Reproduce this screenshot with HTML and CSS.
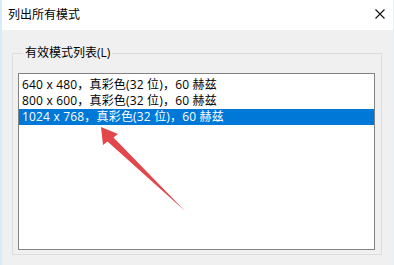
FILE: index.html
```html
<!DOCTYPE html>
<html lang="zh-CN">
<head>
<meta charset="utf-8">
<link rel="stylesheet" href="styles.css">
</head>
<body>
<div class="window">
  <div class="titlebar">
    <span class="title">列出所有模式</span>
    <svg class="close" width="10" height="10" viewBox="0 0 10 10"><path d="M0.5 0.5 L9.5 9.5 M9.5 0.5 L0.5 9.5" stroke="#111" stroke-width="1.1" fill="none"/></svg>
  </div>
  <div class="content">
    <fieldset class="group">
      <legend>有效模式列表(L)</legend>
      <div class="listbox">
        <div class="row">640 x 480，真彩色(32 位)，60 赫兹</div>
        <div class="row">800 x 600，真彩色(32 位)，60 赫兹</div>
        <div class="row selected">1024 x 768，真彩色(32 位)，60 赫兹</div>
      </div>
    </fieldset>
  </div>
  <svg class="arrow" width="394" height="265" viewBox="0 0 394 265">
    <polygon points="101,127 118,134 113.5,137.5 185,211 107.5,141.5 103,145" fill="#e2474b"/>
  </svg>
</div>
</body>
</html>
```
FILE: styles.css
```css
html, body {
  margin: 0;
  padding: 0;
}
body {
  font-family: "Open Sans", "Noto Sans CJK SC", sans-serif;
  font-size: 12px;
  color: #000;
  background: #f0f0f0;
}
.window {
  position: relative;
  width: 394px;
  height: 265px;
  box-sizing: border-box;
  border-left: 2px solid #d6ecfa;
  border-right: 1px solid #e3f1fb;
  background: #f0f0f0;
  overflow: hidden;
}
.titlebar {
  height: 30px;
  background: #fff;
  display: flex;
  align-items: center;
  justify-content: space-between;
  padding: 0 8px 0 6px;
}
.title {
  font-size: 12px;
  line-height: 16px;
  margin-top: -1px;
}
.close {
  margin-top: -2px;
}
.content {
  padding: 15px 11px 0 10px;
}
.group {
  margin: 0;
  border: 1px solid #dcdcdc;
  padding: 12px 6px 4px 5px;
  min-width: 0;
}
.group legend {
  padding: 0 2px;
  margin-left: 5px;
  line-height: 16px;
  font-size: 12px;
}
.listbox {
  height: 172px;
  border: 1px solid #828282;
  background: #fff;
  padding-top: 3px;
  box-sizing: content-box;
}
.row {
  height: 16px;
  line-height: 16px;
  padding-left: 3px;
  white-space: nowrap;
  letter-spacing: 0.18px;
}
.row.selected {
  background: #0078d7;
  color: #fff;
}
.arrow {
  position: absolute;
  left: -2px;
  top: 0;
  pointer-events: none;
}
```
